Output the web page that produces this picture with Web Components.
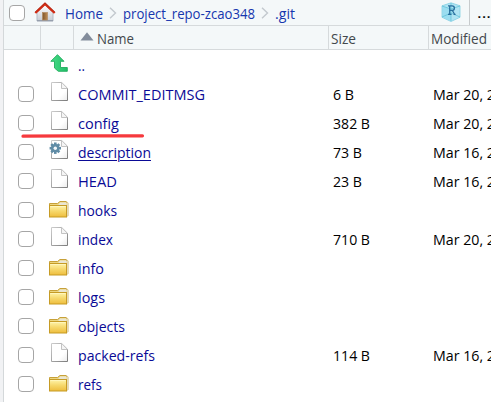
<!DOCTYPE html>
<html lang="en">
<head>
<meta charset="utf-8">
<title>Files</title>
<style>
html, body { margin: 0; height: 100%; overflow: hidden; background: #fff; }
body { font: 15px/20px "Open Sans", "Noto Sans", sans-serif; color: #000; }
</style>
</head>
<body>
<file-pane></file-pane>
<script>
const ICONS = {
  home: `<svg width="22" height="20" viewBox="0 0 22 20"><defs><linearGradient id="w" x2="0" y2="1"><stop stop-color="#fff"/><stop offset="1" stop-color="#c6cbd3"/></linearGradient><linearGradient id="d"><stop stop-color="#7d5428"/><stop offset="1" stop-color="#c08e56"/></linearGradient></defs><path d="M3 10.500L11 3l8 7.500V19H3z" fill="url(#w)" stroke="#b3bac5"/><path d="M3 18.700h16" stroke="#8d97a6"/><rect x="8.500" y="10.500" width="5" height="7.500" fill="url(#d)" stroke="#b28b60" stroke-width=".7"/><path d="M1.300 11L11 1.800 20.700 11" fill="none" stroke="#d52b12" stroke-width="2.300"/><path d="M1 10L11 .9 21 10" fill="none" stroke="#8e2b20" stroke-width=".5"/></svg>`,
  chevron: `<svg width="8" height="12" viewBox="0 0 8 12"><path d="M1 .8L6.500 6 1 11.200" fill="none" stroke="#c3c9ce" stroke-width="1.400"/></svg>`,
  project: `<svg width="20" height="20" viewBox="0 0 20 20"><path d="M10 .8L19 3.800v11.500L10 19.500 1 15.300V3.800z" fill="#b0e4f3" stroke="#83cfe2" stroke-width=".8"/><path d="M1.500 4.200L10 7v12L1.500 15z" fill="#8dd8ef" opacity=".6"/><path d="M10 1v18M1 4l9 3 9-3M1 15l9-4 9 4" fill="none" stroke="#5cbfd4" stroke-width=".7"/><path d="M7 3.800h4.100c3 0 3 4.300.3 4.700l2.300 4M8.700 4v8.500M7 12.400h3.500M12.600 12.400h2M8.600 8.400h3" fill="none" stroke="#286f9d" stroke-width="1.300"/></svg>`,
  sort: `<svg width="14" height="9" viewBox="0 0 14 9"><path d="M.5 8.500L7 .3l6.500 8.200z" fill="#828c9b"/></svg>`,
  up: `<svg width="18" height="18" viewBox="0 0 18 18"><defs><linearGradient id="g"><stop stop-color="#48dc87"/><stop offset="1" stop-color="#22bd67"/></linearGradient></defs><path d="M7.500.7L14 7.300h-3.500v6.200h6.800v3.800h-9L4.500 14V7.300H.8z" fill="url(#g)" stroke="#20ad5e" stroke-width=".9"/></svg>`,
  file: `<svg width="18" height="20" viewBox="0 0 18 20"><defs><linearGradient id="p" x2="1" y2="1"><stop stop-color="#fff"/><stop offset=".65" stop-color="#fff"/><stop offset="1" stop-color="#ebebeb"/></linearGradient><linearGradient id="o" x2="1" y2="1"><stop stop-color="#ccc"/><stop offset="1" stop-color="#7c7c7c"/></linearGradient></defs><path d="M.5.500h10.200l5.800 5.800v12.200H.5z" fill="url(#p)" stroke="url(#o)"/><path d="M10.500.700v5.800h5.800" fill="#f5f5f5" stroke="#bcbcbc" stroke-width=".9"/></svg>`,
  folder: `<svg width="20" height="17" viewBox="0 0 20 17"><defs><linearGradient id="f" x2="0" y2="1"><stop stop-color="#fff5ac"/><stop offset=".5" stop-color="#f6d86c"/><stop offset="1" stop-color="#eebd3d"/></linearGradient></defs><path d="M9 3.500L11 .7h7l1.300 1.500v12.500L17 16V5z" fill="#e6dcc0" stroke="#d4bd78" stroke-width=".6"/><path d="M.5 4V2.500h8l2.500-2h6l1 1.500v3H.5z" fill="#ecd67f"/><path d="M.5 4V2.500h8l2.500-2h6l1 1.500" fill="none" stroke="#c7a139"/><path d="M11 1.500h6.500v2.800H9z" fill="#e9e5d4"/><rect x=".5" y="4.500" width="17" height="11.500" fill="url(#f)" stroke="#c69b25"/><path d="M1.500 5.500h15" stroke="#fff6bb"/></svg>`
};
ICONS.config = ICONS.file.replace('</svg>', `<g transform="translate(4.300 8.200)"><g fill="#608ca6">${[0,45,90,135].map(a => `<rect x="-1.300" y="-5.700" width="2.600" height="11.400" transform="rotate(${a})"/>`).join('')}<circle r="4.100"/></g><circle r="1.700" fill="#f3f7fa"/></g></svg>`);

class UiIcon extends HTMLElement {
  connectedCallback() {
    this.attachShadow({ mode: 'open' }).innerHTML =
      `<style>:host{display:block;flex:none}svg{display:block;overflow:visible}</style>${ICONS[this.getAttribute('name')]}`;
  }
}
customElements.define('ui-icon', UiIcon);

/* A label condensed horizontally to occupy a given advance width. */
class FitText extends HTMLElement {
  connectedCallback() {
    this.attachShadow({ mode: 'open' }).innerHTML =
      `<style>:host{display:block;flex:none;white-space:pre}span{display:inline-block;transform-origin:0 50%}:host([underline]) span{text-decoration:underline;text-underline-offset:2px;text-decoration-thickness:1px;text-decoration-skip-ink:auto}</style><span><slot></slot></span>`;
    const span = this.shadowRoot.querySelector('span');
    const want = +this.getAttribute('w');
    span.style.transform = `scaleX(${want / span.getBoundingClientRect().width})`;
    this.style.width = want + 'px';
  }
}
customElements.define('fit-text', FitText);

class CheckBox extends HTMLElement {
  connectedCallback() {
    this.attachShadow({ mode: 'open' }).innerHTML =
      `<style>:host{display:block;flex:none;box-sizing:border-box;width:16px;height:16px;border:1px solid #a6a6a6;border-radius:4px;background:#fff}</style>`;
  }
}
customElements.define('check-box', CheckBox);

class PathBar extends HTMLElement {
  connectedCallback() {
    this.attachShadow({ mode: 'open' }).innerHTML = `<style>
      :host{display:flex;box-sizing:border-box;height:26px;background:#f4f8f9;border-bottom:1px solid #d6dadc;color:#1636ae}
      .path{display:flex;flex:1;align-items:center;padding-left:5px}
      check-box{margin-top:1px}
      .path ui-icon[name=home]{margin:-1px 9px 0 9px}
      .path ui-icon[name=chevron]{margin:0 6px 0 6px}
      .project{margin:-1px 8px 0 0;align-self:center}
      .more{box-sizing:border-box;width:22px;border-left:1px solid #c7cbcd;padding:2px 0 0 7px;color:#000}
    </style>
    <div class="path"><check-box></check-box><ui-icon name="home"></ui-icon><fit-text w="38">Home</fit-text><ui-icon name="chevron"></ui-icon><fit-text w="132">project_repo-zcao348</fit-text><ui-icon name="chevron"></ui-icon><fit-text w="20">.git</fit-text></div>
    <ui-icon class="project" name="project"></ui-icon><div class="more"><fit-text w="14">...</fit-text></div>`;
  }
}
customElements.define('path-bar', PathBar);

class ColumnHead extends HTMLElement {
  connectedCallback() {
    this.attachShadow({ mode: 'open' }).innerHTML = `<style>
      :host{display:grid;grid-template-columns:37px 33px 255px 100px 1fr;box-sizing:border-box;height:24px;background:#f4f8f9;border-bottom:1px solid #d6dadc;color:#43484c}
      div{display:flex;align-items:center;box-sizing:border-box;border-right:1px solid #d6dadc;padding-left:2px;overflow:hidden}
      div:last-child{border:0;padding-left:2px}
      .name{padding-left:6px;gap:3px}
      ui-icon{margin-top:-3px}
      fit-text{margin-top:1px}
    </style>
    <div></div><div></div><div class="name"><ui-icon name="sort"></ui-icon><fit-text w="37">Name</fit-text></div>
    <div><fit-text w="25">Size</fit-text></div><div><fit-text w="56">Modified</fit-text></div>`;
  }
}
customElements.define('column-head', ColumnHead);

class FileRow extends HTMLElement {
  connectedCallback() {
    const g = n => this.getAttribute(n) || '';
    const icon = g('icon'), size = g('size'), date = g('date');
    this.attachShadow({ mode: 'open' }).innerHTML = `<style>
      :host{display:grid;grid-template-columns:29px 31px 255px 100px 1fr;align-items:center;height:29px;padding-left:14px}
      .name{color:#0a0a96}
      ui-icon[name=file],ui-icon[name=config]{margin:-3px 0 0 4px}
      ui-icon[name=folder]{margin:-1px 0 0 2px}
      ui-icon[name=up]{margin:-3px 0 0 3px}
    </style>
    <div>${icon === 'up' ? '' : '<check-box></check-box>'}</div><ui-icon name="${icon}"></ui-icon>
    <fit-text class="name" ${icon === 'config' ? 'underline' : ''} w="${g('w')}">${g('name')}</fit-text>
    <div>${size ? `<fit-text w="${{ 3: 21, 4: 29, 5: 37 }[size.length]}">${size}</fit-text>` : ''}</div>
    <div>${date ? `<fit-text w="62">${date}, 2</fit-text>` : ''}</div>`;
  }
}
customElements.define('file-row', FileRow);

class FilePane extends HTMLElement {
  connectedCallback() {
    const rows = [
      ['up', '..', 7], ['file', 'COMMIT_EDITMSG', 127, '6 B', 'Mar 20'], ['file', 'config', 41, '382 B', 'Mar 20'],
      ['config', 'description', 73, '73 B', 'Mar 16'], ['file', 'HEAD', 39, '23 B', 'Mar 16'], ['folder', 'hooks', 39],
      ['file', 'index', 35, '710 B', 'Mar 20'], ['folder', 'info', 26], ['folder', 'logs', 27], ['folder', 'objects', 47],
      ['file', 'packed-refs', 77, '114 B', 'Mar 16'], ['folder', 'refs', 24]];
    this.attachShadow({ mode: 'open' }).innerHTML = `<style>
      :host{display:block;position:relative;box-sizing:border-box;height:402px;border-left:1px solid #d4d8da;margin-left:3px;box-shadow:-3px 0 #f1f2f4}
      .list{height:352px;overflow:hidden}
      .mark{position:absolute;left:17px;top:133px}
    </style><path-bar></path-bar><column-head></column-head>
    <div class="list">${rows.map(([i, n, w, s = '', d = '']) => `<file-row icon="${i}" name="${n}" w="${w}" size="${s}" date="${d}"></file-row>`).join('')}</div>
    <svg class="mark" width="124" height="6"><path d="M2 3.200L50 2.900 121.500 2.800" fill="none" stroke="#f6393d" stroke-width="3.200" stroke-linecap="round"/></svg>`;
  }
}
customElements.define('file-pane', FilePane);
</script>
</body>
</html>
